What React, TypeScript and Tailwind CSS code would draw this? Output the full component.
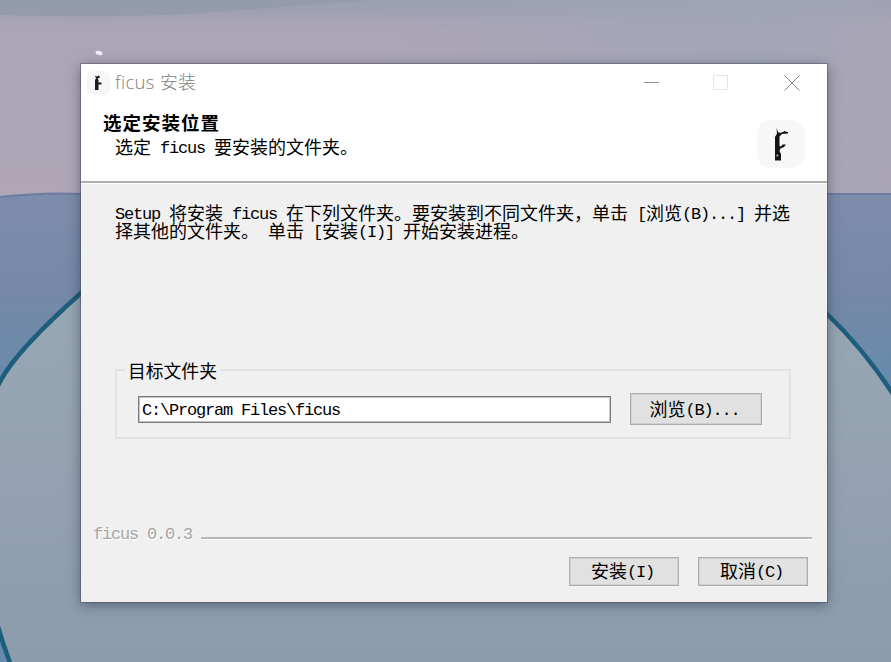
import type { ReactNode } from "react";

// Sets half-width runs in a 9px monospace grid beside 18px full-width characters.
function Mixed({ text }: { text: string }) {
  const runs = text.match(/[\x20-\x7e]+|[^\x20-\x7e]+/g) ?? [];
  return (
    <span className="whitespace-pre">
      {runs.map((run, i) =>
        /^[\x20-\x7e]/.test(run) ? (
          <span key={i} className="relative -top-px font-['Liberation_Mono',monospace] text-[17px] leading-[0] tracking-[-1.2px]">
            {run}
          </span>
        ) : (
          <span key={i}>{run}</span>
        ),
      )}
    </span>
  );
}

function Wallpaper() {
  return (
    <svg className="absolute inset-0" width="891" height="662" viewBox="0 0 891 662" aria-hidden="true">
      <defs>
        <linearGradient id="sky" x1="0" y1="0" x2="0" y2="1">
          <stop offset="0" stopColor="#9aa0b0" />
          <stop offset="0.06" stopColor="#9fa1b2" />
          <stop offset="0.14" stopColor="#aca5b7" />
          <stop offset="1" stopColor="#afa7b6" />
        </linearGradient>
        <linearGradient id="skyRight" x1="0" y1="0" x2="1" y2="0">
          <stop offset="0.4" stopColor="#a0a5b7" stopOpacity="0" />
          <stop offset="0.85" stopColor="#a0a5b7" stopOpacity="0.8" />
          <stop offset="1" stopColor="#a5a5b6" stopOpacity="0.5" />
        </linearGradient>
        <linearGradient id="sea" x1="0" y1="195" x2="0" y2="400" gradientUnits="userSpaceOnUse">
          <stop offset="0" stopColor="#7e8cab" />
          <stop offset="0.5" stopColor="#7589a7" />
          <stop offset="1" stopColor="#648bab" />
        </linearGradient>
        <linearGradient id="disc" x1="0" y1="300" x2="0" y2="662" gradientUnits="userSpaceOnUse">
          <stop offset="0" stopColor="#98a7b4" />
          <stop offset="0.6" stopColor="#92a0b1" />
          <stop offset="1" stopColor="#8b9cad" />
        </linearGradient>
      </defs>
      <rect width="891" height="200" fill="url(#sky)" />
      <rect width="891" height="200" fill="url(#skyRight)" />
      <path d="M0 0H370L190 14Q90 18 0 15Z" fill="#9299a8" opacity="0.7" />
      <path d="M0 197Q45 192 81 194H891V662H0Z" fill="url(#sea)" />
      <path d="M0 197Q45 192 81 194H891" fill="none" stroke="#6c7ba2" strokeWidth="2" />
      <path
        d="M12 668C-30 560 -30 435 1 380Q17 350 81 293C270 130 640 130 827 314Q865 350 897 400V668Z"
        fill="url(#disc)"
        stroke="#1d5e7c"
        strokeWidth="4.5"
      />
      <ellipse cx="99" cy="53" rx="3.5" ry="2" fill="#f1eff8" transform="rotate(15 99 53)" />
    </svg>
  );
}

function Trunk({ className }: { className: string }) {
  return (
    <svg className={className} viewBox="0 0 48 48" aria-hidden="true">
      <rect width="48" height="48" rx="14" fill="#f7f7f7" />
      <path
        d="M19.5 8L21 12L23 13L27 11.5V10.5L28 11.5L31 12V13.5L25 14L22.5 16.5V26L24 26.5L25.5 24.5L29 24.5L27 27L23.5 28.5L22.5 31L24 34V40.5H18V17L20 13.5Z"
        fill="#151515"
      />
      <circle cx="20.3" cy="35.5" r="1" fill="#bbb" />
    </svg>
  );
}

function SmallTrunk() {
  return (
    <svg className="size-6" viewBox="0 0 24 24" aria-hidden="true">
      <rect width="24" height="24" rx="7" fill="#f7f7f7" />
      <path d="M9 4.5L10.5 5.5L13 4.5L14 6.5L11.5 7.5L12.5 9V11.5H15.5V13.5H12.5V19H9V9L10 7.5Z" fill="#1c1c1c" />
    </svg>
  );
}

function PushButton({ children, className }: { children: ReactNode; className: string }) {
  return (
    <button
      className={`flex items-center justify-center border-[1.5px] border-[#adadad] bg-[#e1e1e1] pb-[3px] pr-[3px] leading-[18px] shadow-[inset_0_0_0_1px_#cfcfcf] ${className}`}
    >
      {children}
    </button>
  );
}

export default function App() {
  return (
    <main className="relative h-[662px] w-[891px] overflow-hidden pl-[81px] pt-16 font-['Noto_Sans_CJK_SC',sans-serif] text-[18px] leading-[18px] text-black">
      <Wallpaper />
      <section className="relative flex h-[538px] w-[746px] flex-col bg-[#f0f0f0] shadow-[0_0_0_1px_rgba(70,75,95,0.45),0_3px_12px_rgba(25,35,55,0.5)]">
        <div className="h-[119px] shrink-0 border-b-2 border-[#b0b0b0] bg-white">
          <header className="flex h-[37px] items-center pl-[5px] pr-[27px] text-[#808080]">
            <SmallTrunk />
            <h1 className="ml-[5px] whitespace-pre pb-[4px] text-[18px] font-light">
              <span className="font-['Open_Sans','Noto_Sans',sans-serif] text-[18.5px] leading-[0] tracking-[0.35px]">ficus </span>安装
            </h1>
            <div className="ml-auto flex items-center gap-[54px]">
              <svg width="15" height="16" viewBox="0 0 15 16"><path d="M0 7.5H15" stroke="#8f8f8f" /></svg>
              <svg width="15" height="16" viewBox="0 0 15 16"><rect x="0.5" y="0.5" width="14" height="14" fill="none" stroke="#e4e4e4" /></svg>
              <svg className="ml-[2px]" width="16" height="16" viewBox="0 0 16 16"><path d="M0.5 0.5L15.5 15.5M15.5 0.5L0.5 15.5" stroke="#858585" fill="none" /></svg>
            </div>
          </header>
          <div className="flex justify-between pl-[22px] pr-[22px] pt-[12px]">
            <div>
              <h2 className="text-[18.5px] font-bold tracking-[1px]">选定安装位置</h2>
              <p className="ml-[12px] mt-[6px]"><Mixed text="选定 ficus 要安装的文件夹。" /></p>
            </div>
            <Trunk className="mt-[7px] size-12" />
          </div>
        </div>
        <div className="h-px shrink-0 bg-white" />
        <div className="px-[34px] pt-[19px]">
          <p><Mixed text="Setup 将安装 ficus 在下列文件夹。要安装到不同文件夹，单击 [浏览(B)...] 并选" /></p>
          <p><Mixed text="择其他的文件夹。 单击 [安装(I)] 开始安装进程。" /></p>
        </div>
        <fieldset className="ml-[34px] mt-[122px] h-[78px] w-[676px] border-2 border-[#e2e2e2] pl-[21px]">
          <legend className="-ml-[13px] px-[3px] text-[17.8px]">目标文件夹</legend>
          <div className="mt-[14px] flex items-start">
            <input
              readOnly
              value="C:\Program Files\ficus"
              className="mt-[3px] h-[27px] w-[473px] border-[1.5px] border-[#7a7a7a] bg-white pl-[3px] pt-[2px] font-['Liberation_Mono',monospace] text-[17px] tracking-[-1.2px] shadow-[inset_0_0_0_1px_#c4c4c4] outline-none"
            />
            <PushButton className="ml-[19px] h-8 w-[132px]"><Mixed text="浏览(B)..." /></PushButton>
          </div>
        </fieldset>
        <div className="mt-[87px] flex items-center pl-[12px] pr-[15px]">
          <span className="whitespace-pre font-['Liberation_Mono',monospace] text-[17px] tracking-[-1.2px] text-[#a5a5a5] [text-shadow:1px_1px_0_#fff]">ficus 0.0.3</span>
          <div className="ml-[9px] mt-[6px] h-[3px] flex-1 border-b border-t-2 border-b-white border-t-[#b8b8b8]" />
        </div>
        <div className="mb-[16px] mr-[19px] mt-auto flex justify-end gap-[19px]">
          <PushButton className="h-[29px] w-[110px]"><Mixed text="安装(I)" /></PushButton>
          <PushButton className="h-[29px] w-[110px]"><Mixed text="取消(C)" /></PushButton>
        </div>
      </section>
    </main>
  );
}
